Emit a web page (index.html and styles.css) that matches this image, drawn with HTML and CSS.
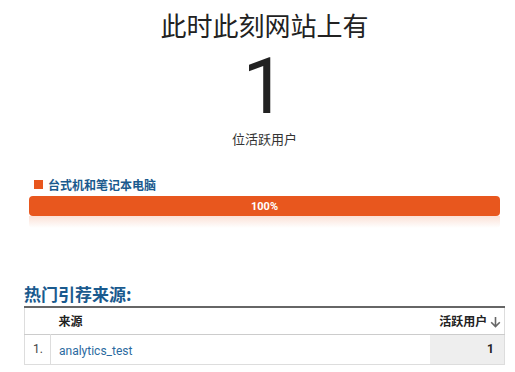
FILE: index.html
```html
<!DOCTYPE html>
<html lang="zh">
<head>
<meta charset="utf-8">
<link rel="stylesheet" href="styles.css">
</head>
<body>
<div class="page">
  <div class="hero">
    <h1 class="title">此时此刻网站上有</h1>
    <div class="count">1</div>
    <div class="count-label">位活跃用户</div>
  </div>
  <div class="device">
    <div class="legend"><span class="swatch"></span><span class="legend-text">台式机和笔记本电脑</span></div>
    <div class="bar"><span class="bar-text">100%</span></div>
    <div class="bar-reflect"></div>
  </div>
  <h2 class="section-title">热门引荐来源:</h2>
  <table class="sources">
    <thead>
      <tr>
        <th class="c-idx"></th>
        <th class="c-src">来源</th>
        <th class="c-val">活跃用户 <span class="arrow">
          <svg width="11" height="12" viewBox="0 0 11 12"><path d="M5.5 1v9.5M1.2 6.2l4.3 4.3 4.3-4.3" fill="none" stroke="#666" stroke-width="1.6"/></svg>
        </span></th>
      </tr>
    </thead>
    <tbody>
      <tr>
        <td class="c-idx">1.</td>
        <td class="c-src"><a class="link">analytics_test</a></td>
        <td class="c-val num">1</td>
      </tr>
    </tbody>
  </table>
</div>
</body>
</html>
```
FILE: styles.css
```css
* { box-sizing: border-box; }
body {
  margin: 0;
  background: #fff;
  font-family: "Noto Sans CJK SC", "Noto Sans", sans-serif;
  color: #333;
}
.page {
  padding: 0 10px 0 24px;
}
.hero {
  text-align: center;
  padding-top: 7px;
}
.title {
  margin: 0;
  font-size: 26px;
  font-weight: 400;
  line-height: 36px;
  color: #222;
}
.count {
  font-family: Roboto, "Open Sans", sans-serif;
  font-weight: 400;
  font-size: 78px;
  line-height: 78px;
  color: #222;
  margin-top: 5px;
}
.count-label {
  font-size: 13px;
  line-height: 18px;
  margin-top: 4px;
  color: #333;
}
.device {
  margin-top: 28px;
  padding: 0 5px;
}
.legend {
  display: flex;
  align-items: center;
  gap: 5px;
  padding-left: 5px;
  height: 16px;
}
.swatch {
  width: 9px;
  height: 9px;
  background: #e8561d;
}
.legend-text {
  font-size: 12px;
  font-weight: 700;
  color: #1a5a8e;
}
.bar {
  margin-top: 4px;
  height: 20px;
  border-radius: 4px;
  background: #e8571e;
  display: flex;
  align-items: center;
  justify-content: center;
}
.bar-text {
  font-family: Roboto, "Liberation Sans", sans-serif;
  font-weight: 700;
  font-size: 11px;
  color: #fff;
}
.bar-reflect {
  height: 12px;
  background: linear-gradient(to bottom, rgba(232, 87, 30, 0.18), rgba(232, 87, 30, 0));
  border-radius: 0 0 4px 4px;
}
.section-title {
  margin: 56px 0 0;
  font-size: 17px;
  font-weight: 700;
  line-height: 20px;
  color: #1a5a8e;
  padding-bottom: 2px;
}
.sources {
  width: 100%;
  border-collapse: collapse;
  border-top: 2px solid #666;
  font-size: 12px;
}
.sources th, .sources td {
  padding: 0;
  text-align: left;
}
.sources thead tr {
  height: 27px;
  border-left: 1px solid #ddd;
  border-right: 1px solid #ddd;
  border-bottom: 1px solid #ccc;
}
.sources th {
  font-weight: 700;
  color: #222;
}
.sources tbody tr {
  height: 30px;
  border: 1px solid #ddd;
}
.c-idx {
  width: 26px;
  padding-left: 8px !important;
  color: #444;
}
.sources td.c-idx {
  border-right: 1px solid #ddd;
  font-family: Roboto, "Liberation Sans", sans-serif;
  font-size: 12px;
}
.c-src {
  padding-left: 8px !important;
}
.link {
  font-family: Roboto, "Liberation Sans", sans-serif;
  color: #2b6aa0;
  font-size: 12px;
}
.c-val {
  width: 75px;
  text-align: right !important;
  padding-right: 3px !important;
  white-space: nowrap;
}
.arrow svg {
  vertical-align: -2px;
}
.num {
  background: #eee;
  font-family: Roboto, "Liberation Sans", sans-serif;
  font-weight: 700;
  color: #222;
  padding-right: 10px !important;
}
```
